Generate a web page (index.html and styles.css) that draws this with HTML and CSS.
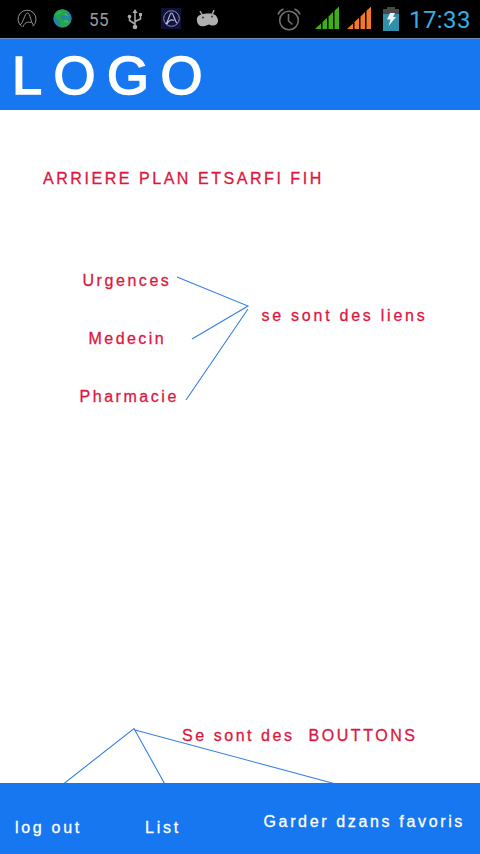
FILE: index.html
```html
<!DOCTYPE html>
<html lang="fr">
<head>
<meta charset="utf-8">
<title>Logo</title>
<link rel="stylesheet" href="styles.css">
</head>
<body>
<div class="screen">
  <div class="status">
    <svg class="ic swirl" width="20" height="20" viewBox="0 0 20 20" fill="none" stroke="#929292"><path d="M5 17.6A9 9 0 1 1 15.500 17.300M3 16C6.500 14 7.500 4 10.500 4S13.500 14 17 16.500M6 18C7.500 13.500 10 12.500 14.500 13.500"/></svg>
    <svg class="ic globe" width="19" height="19" viewBox="0 0 19 19"><circle cx="9.500" cy="9.500" r="9.200" fill="#2386a0"/><path d="M3 3C7-.5 12 0 15 3L13 7 9 6 7 9 10 11 15 10 17 13C14 19 8 19 6 16L7 12 3 9 1 6Z" fill="#25a54c"/><path d="M4 5l4-2M11 12l4 1M12 5l3 2" stroke="#42c85b"/></svg>
    <span class="level">55</span>
    <svg class="ic usb" width="16" height="21" viewBox="0 0 16 21" fill="none" stroke="#ababab" stroke-width="1.500"><path d="M8 17V3M8 15L2.500 11.500V8M8 12.500L13.500 10V6"/><path d="M8 0l2.600 4H5.400zM12 4h3v3h-3z" fill="#ababab" stroke="none"/><circle cx="2.500" cy="7.500" r="1.800" fill="#ababab" stroke="none"/><circle cx="8" cy="18" r="2.300" fill="#ababab" stroke="none"/></svg>
    <svg class="ic app" width="20" height="21" viewBox="0 0 20 21" fill="none"><path fill="#11113a" d="M0 0h20v21H0z"/><circle cx="10.500" cy="10.500" r="7.800" stroke="#8b93bd"/><path d="M5 16C7.500 13 8.500 5 10.500 5S13.500 13 16 15M6 16C8 12 10 11 13 12.500" stroke="#b4bfdc" stroke-width="1.200"/></svg>
    <svg class="ic droid" width="23" height="17" viewBox="0 0 23 17"><path d="M4 1l3 5M18 0l-2 5" stroke="#b0b0b0" stroke-width="1.400"/><path d="M1 11C0 6 4 4 11 3.500S21 5 22 10C22.500 14 19 16 15.500 15.500L13 14.500 9 16C4 17 1.500 15 1 11Z" fill="#b0b0b0"/><circle cx="7" cy="7.500" r="1" fill="#333"/><circle cx="16" cy="6.500" r="1" fill="#333"/></svg>
    <svg class="ic alarm" width="24" height="23" viewBox="0 0 24 23" fill="none" stroke="#707070" stroke-width="1.600"><circle cx="12" cy="12.500" r="9.300"/><path d="M11.500 6v7l4 3.500M1 6.500Q2.500 2.500 6.500 1M17.500 1Q21.500 2.500 23 6.500"/></svg>
    <svg class="ic bars" width="25" height="23" viewBox="0 0 25 23" fill="#3fae1c"><path d="M0 23l6-5.600V23zM7.500 23v-7l4.500-4.300V23zM13.500 23V10.400l4.500-4.300V23zM19.500 23V4.800L24 .5V23z"/></svg>
    <svg class="ic bars2" width="25" height="23" viewBox="0 0 25 23" fill="#f4772a"><path d="M0 23l6-5.600V23zM7.500 23v-7l4.500-4.300V23zM13.500 23V10.400l4.500-4.300V23zM19.500 23V4.800L24 .5V23z"/></svg>
    <svg class="ic batt" width="16" height="24" viewBox="0 0 16 24"><path d="M4 0h8v2h4v5H0V2h4z" fill="#484848"/><path d="M0 7h16v17H0z" fill="#318fab"/><path d="M7 6h5l-2 4h3L5.500 19l2-6.500H4z" fill="#e8f4f8"/></svg>
    <span class="clock">17:33</span>
  </div>
  <header class="header">LOGO</header>
  <main class="main">
    <svg class="lines" width="480" height="673" viewBox="0 110 480 673" fill="none" stroke="#347fe4" stroke-width="1.100"><path d="M177 277L248 306L192 339M248 309L186 400M64 783.500L134 728.500L164.500 783.500M135 730L334 783.500"/></svg>
    <p class="label title">ARRIERE PLAN ETSARFI FIH</p>
    <div class="links">
      <div class="names">
        <span class="label urg">Urgences</span>
        <span class="label med">Medecin</span>
        <span class="label pha">Pharmacie</span>
      </div>
      <span class="label note">se sont des liens</span>
    </div>
    <p class="label buttons">Se sont des&nbsp; BOUTTONS</p>
  </main>
  <footer class="footer">
    <span class="label out">log out</span>
    <span class="label list">List</span>
    <span class="label fav">Garder dzans favoris</span>
  </footer>
</div>
</body>
</html>
```
FILE: styles.css
```css
* { box-sizing: border-box; }
body { margin: 0; background: #fff; }
.screen {
  width: 480px;
  height: 854px;
  display: flex;
  flex-direction: column;
  overflow: hidden;
  font-family: "Liberation Sans", Arial, sans-serif;
}
.status {
  height: 39px;
  flex: none;
  display: flex;
  align-items: flex-start;
  background: #000;
  border-bottom: 1px solid #6b91b8;
  font-family: Roboto, sans-serif;
}
.ic { flex: none; display: block; }
.swirl { margin: 9px 0 0 17px; }
.globe { margin: 9px 0 0 16px; }
.level { width: 22px; margin: 8px 0 0 17px; font-size: 19px; line-height: 24px; letter-spacing: .4px; color: #9c9c9c; transform: scaleX(.9); transform-origin: left; }
.usb { margin: 9px 0 0 16px; }
.app { margin: 8px 0 0 18px; }
.droid { margin: 10px 0 0 15px; }
.alarm { margin: 8px 0 0 58px; }
.bars { margin: 6px 0 0 14px; }
.bars2 { margin: 6px 0 0 7px; }
.batt { margin: 7px 0 0 11px; }
.clock { margin: 5px 0 0 10px; font-size: 24px; line-height: 30px; font-weight: 400; letter-spacing: .4px; color: #37aee0; }
.header {
  height: 71px;
  flex: none;
  padding: 6px 0 0 12px;
  background: #1677f1;
  color: #fff;
  font-size: 54px;
  line-height: 60px;
  letter-spacing: 11.5px;
  -webkit-text-stroke: 1.7px #fff;
}
.main {
  position: relative;
  height: 673px;
  flex: none;
  display: flex;
  flex-direction: column;
  align-items: flex-start;
}
.lines { position: absolute; left: 0; top: 0; }
.label {
  margin: 0;
  font-size: 16px;
  line-height: 20px;
  letter-spacing: 2.55px;
  color: #dc1740;
  white-space: nowrap;
  -webkit-text-stroke: .3px currentColor;
}
.title { margin: 59px 0 0 43px; }
.links { display: flex; margin-top: 82px; }
.names { width: 261.5px; display: flex; flex-direction: column; align-items: flex-start; gap: 38px; }
.urg { margin-left: 82.5px; }
.med { margin-left: 88.5px; letter-spacing: 2.45px; }
.pha { margin-left: 79.5px; }
.note { margin-top: 35px; letter-spacing: 2.75px; }
.buttons { margin: 319px 0 0 182px; }
.footer {
  height: 71px;
  flex: none;
  display: flex;
  align-items: flex-start;
  background: #1677f1;
}
.footer .label { color: #fff; }
.out { width: 130px; margin: 35px 0 0 15px; letter-spacing: 2.7px; }
.list { width: 118.5px; margin-top: 35px; letter-spacing: 2.8px; }
.fav { margin-top: 29px; letter-spacing: 2.65px; }
```
